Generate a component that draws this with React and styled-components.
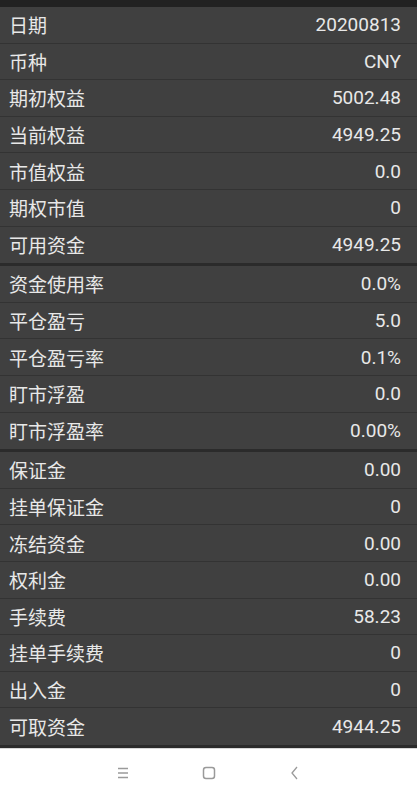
import React from "react";
import styled, { createGlobalStyle } from "styled-components";

const GlobalStyle = createGlobalStyle`
  html, body {
    margin: 0;
    padding: 0;
    background: #ffffff;
  }
  body {
    font-family: Roboto, "Noto Sans CJK SC", sans-serif;
  }
`;

const Screen = styled.div`
  width: 417px;
  height: 800px;
  display: flex;
  flex-direction: column;
  background: #ffffff;
  overflow: hidden;
`;

const TopBar = styled.div`
  height: 7px;
  background: #222222;
  flex-shrink: 0;
`;

const Section = styled.div`
  background: #404040;
  border-bottom: 3px solid #2b2b2b;
`;

const Row = styled.div`
  box-sizing: border-box;
  height: 36.6px;
  display: flex;
  align-items: center;
  justify-content: space-between;
  padding: 0 16px 0 9px;
  border-bottom: ${(p) => (p.last ? "none" : "1px solid #333333")};
  color: #e8e8e8;
  font-size: 19px;
`;

const Label = styled.span`
  font-family: "Noto Sans CJK SC", sans-serif;
`;

const Value = styled.span`
  font-family: Roboto, sans-serif;
`;

const NavBar = styled.div`
  flex: 1;
  border-top: 1px solid #d8d8d8;
  display: flex;
  align-items: center;
  justify-content: center;
  gap: 62px;
  padding-bottom: 2px;
  color: #9a9a9a;
`;

const NavIcon = styled.svg`
  width: 24px;
  height: 24px;
  display: block;
`;

const sections = [
  [
    ["日期", "20200813"],
    ["币种", "CNY"],
    ["期初权益", "5002.48"],
    ["当前权益", "4949.25"],
    ["市值权益", "0.0"],
    ["期权市值", "0"],
    ["可用资金", "4949.25"],
  ],
  [
    ["资金使用率", "0.0%"],
    ["平仓盈亏", "5.0"],
    ["平仓盈亏率", "0.1%"],
    ["盯市浮盈", "0.0"],
    ["盯市浮盈率", "0.00%"],
  ],
  [
    ["保证金", "0.00"],
    ["挂单保证金", "0"],
    ["冻结资金", "0.00"],
    ["权利金", "0.00"],
    ["手续费", "58.23"],
    ["挂单手续费", "0"],
    ["出入金", "0"],
    ["可取资金", "4944.25"],
  ],
];

export default function App() {
  return (
    <>
      <GlobalStyle />
      <Screen>
        <TopBar />
        {sections.map((rows, i) => (
          <Section key={i}>
            {rows.map(([label, value], j) => (
              <Row key={label} last={j === rows.length - 1}>
                <Label>{label}</Label>
                <Value>{value}</Value>
              </Row>
            ))}
          </Section>
        ))}
        <NavBar>
          <NavIcon viewBox="0 0 24 24" fill="none" stroke="currentColor" strokeWidth="1.3">
            <path d="M7 7.5h10M7 12h10M7 16.5h10" />
          </NavIcon>
          <NavIcon viewBox="0 0 24 24" fill="none" stroke="currentColor" strokeWidth="1.5">
            <rect x="6.5" y="6.5" width="11" height="11" rx="2.5" />
          </NavIcon>
          <NavIcon viewBox="0 0 24 24" fill="none" stroke="currentColor" strokeWidth="1.3">
            <path d="M14 6l-5 6 5 6" />
          </NavIcon>
        </NavBar>
      </Screen>
    </>
  );
}
